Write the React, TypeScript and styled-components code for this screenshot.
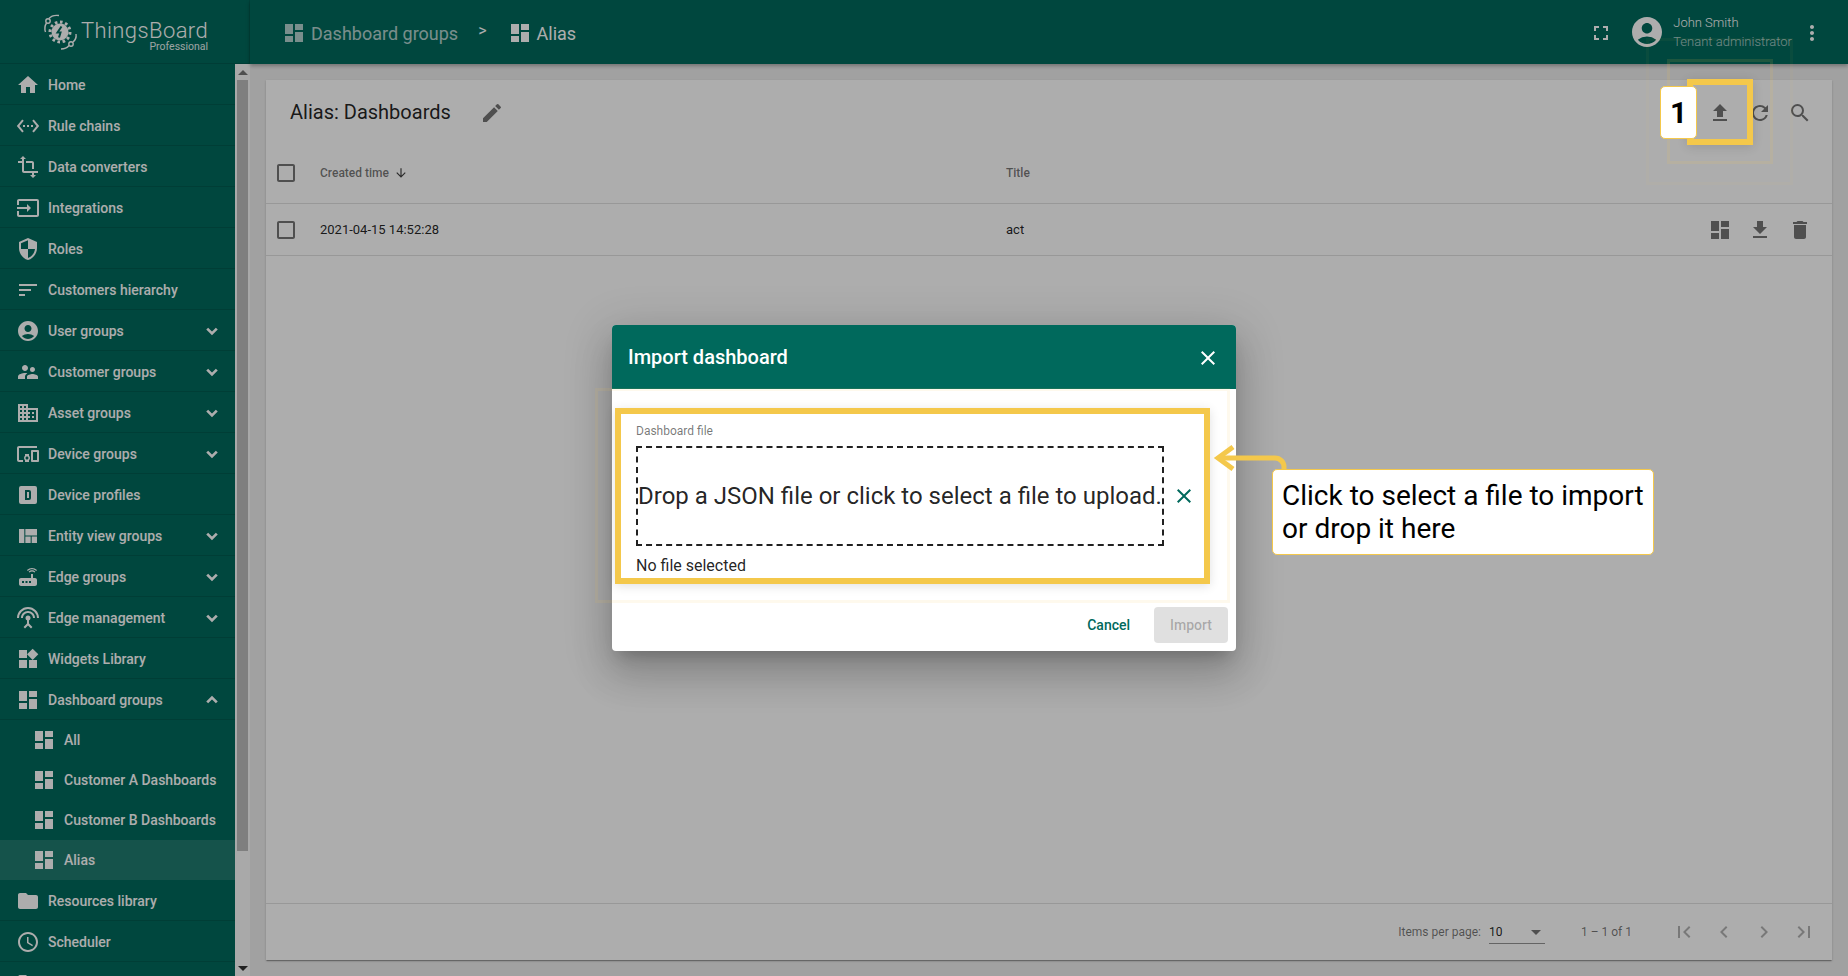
import type { ReactNode } from 'react';
import styled, { createGlobalStyle } from 'styled-components';
import {
  MdAccountCircle,
  MdArrowDownward,
  MdArrowDropDown,
  MdCheckBoxOutlineBlank,
  MdChevronLeft,
  MdChevronRight,
  MdClose,
  MdDashboard,
  MdDelete,
  MdDevicesOther,
  MdDomain,
  MdEdit,
  MdFileDownload,
  MdFileUpload,
  MdFirstPage,
  MdFolder,
  MdFullscreen,
  MdHome,
  MdInput,
  MdLastPage,
  MdMoreVert,
  MdRefresh,
  MdRouter,
  MdSchedule,
  MdSearch,
  MdSecurity,
  MdSettingsEthernet,
  MdSettingsInputAntenna,
  MdSort,
  MdSupervisorAccount,
  MdTransform,
  MdViewQuilt,
  MdWidgets,
} from 'react-icons/md';

const YELLOW = '#f4c84b';
const TEAL = '#00695c';

const GlobalStyle = createGlobalStyle`
  html, body {
    margin: 0;
    height: 100%;
    overflow: hidden;
    font-family: Roboto, "Liberation Sans", sans-serif;
  }
  * {
    box-sizing: border-box;
  }
`;

const Shell = styled.div`
  position: relative;
  display: flex;
  width: 1848px;
  height: 976px;
  overflow: hidden;
  background: #eee;
`;

const Sidebar = styled.aside`
  display: flex;
  flex-direction: column;
  flex: 0 0 250px;
  background: ${TEAL};
  color: #fff;
`;

const LogoBar = styled.div`
  display: flex;
  align-items: center;
  flex: 0 0 64px;
  padding-left: 42px;
  border-bottom: 1px solid rgba(0, 0, 0, 0.12);
  border-right: 1px solid rgba(0, 0, 0, 0.08);
`;

const LogoText = styled.div`
  display: flex;
  flex-direction: column;
  align-items: flex-end;
  margin: 11px 0 0 1px;
`;

const LogoName = styled.span`
  font-size: 22px;
  line-height: 20px;
  font-weight: 300;
  letter-spacing: 0.4px;
`;

const LogoSub = styled.span`
  font-size: 10.5px;
  line-height: 12px;
  opacity: 0.9;
`;

const SideBody = styled.div`
  display: flex;
  flex: 1;
  min-height: 0;
`;

const Nav = styled.nav`
  flex: 1;
  min-width: 0;
  overflow: hidden;
`;

const NavRow = styled.div<{ $sub?: boolean; $active?: boolean }>`
  display: flex;
  align-items: center;
  height: ${({ $sub }) => ($sub ? '40px' : '41px')};
  padding: ${({ $sub }) => ($sub ? '0 0 0 32px' : '1px 0 0 16px')};
  font-size: 14px;
  font-weight: 500;
  white-space: nowrap;
  background: ${({ $active }) => ($active ? 'rgba(255, 255, 255, 0.12)' : 'transparent')};
  border-bottom: ${({ $sub }) => ($sub ? 'none' : '1px solid rgba(0, 0, 0, 0.12)')};

  svg {
    flex: none;
    font-size: 24px;
  }
`;

const NavLabel = styled.span`
  flex: 1;
  margin-left: 8px;
`;

const ChevronIcon = styled.svg<{ $up?: boolean }>`
  margin-right: 11px;
  transform: ${({ $up }) => ($up ? 'rotate(180deg)' : 'none')};
`;

const Chevron = ({ up }: { up?: boolean }) => (
  <ChevronIcon $up={up} width="24" height="24" viewBox="0 0 24 24" fill="none" aria-hidden="true">
    <path d="M7.2 9.6l4.8 4.8 4.8-4.8" stroke="currentColor" strokeWidth="2.7" />
  </ChevronIcon>
);

const ScrollTrack = styled.div`
  display: flex;
  flex-direction: column;
  align-items: center;
  flex: 0 0 15px;
  background: #fafafa;
`;

const ScrollArrow = styled.div<{ $down?: boolean }>`
  flex: 0 0 5px;
  width: 0;
  height: 0;
  margin: 6px 0 5px;
  border-left: 5px solid transparent;
  border-right: 5px solid transparent;
  border-bottom: ${({ $down }) => ($down ? 'none' : '5px solid #777')};
  border-top: ${({ $down }) => ($down ? '5px solid #333' : 'none')};
`;

const ScrollThumb = styled.div`
  width: 11px;
  flex: 0 0 771px;
  background: #bcbcbc;
`;

const ScrollGap = styled.div`
  flex: 1;
`;

const Main = styled.main`
  display: flex;
  flex-direction: column;
  flex: 1;
  min-width: 0;
  isolation: isolate;
`;

const TopBar = styled.header`
  display: flex;
  align-items: center;
  flex: 0 0 64px;
  padding: 2px 24px 0 32px;
  background: ${TEAL};
  color: #fff;
  box-shadow: 0 2px 4px rgba(0, 0, 0, 0.3);
  z-index: 1;
`;

const Crumb = styled.span<{ $muted?: boolean }>`
  display: flex;
  align-items: center;
  gap: 5px;
  font-size: 18px;
  opacity: ${({ $muted }) => ($muted ? 0.7 : 1)};

  svg {
    font-size: 24px;
  }
`;

const CrumbArrow = styled.span`
  margin: -6px 21px 0 20px;
  font-size: 16px;
`;

const TopSpacer = styled.div`
  flex: 1;
`;

const UserBlock = styled.div`
  display: flex;
  align-items: center;
  margin: -2px 8px 0 16px;
`;

const UserText = styled.div`
  display: flex;
  flex-direction: column;
  gap: 5px;
  margin-left: 8px;
  font-size: 13px;
  line-height: 14px;
  font-weight: 300;
`;

const UserRole = styled.span`
  opacity: 0.65;
`;

const Content = styled.div`
  flex: 1;
  min-height: 0;
  padding: 16px;
`;

const Card = styled.section`
  display: flex;
  flex-direction: column;
  height: 100%;
  background: #fff;
  box-shadow: 0 2px 1px -1px rgba(0, 0, 0, 0.2), 0 1px 1px rgba(0, 0, 0, 0.14),
    0 1px 3px rgba(0, 0, 0, 0.12);
`;

const CardToolbar = styled.div`
  display: flex;
  align-items: center;
  flex: 0 0 64px;
  padding: 0 20px 0 24px;
`;

const CardTitle = styled.h1`
  margin: 0 29px 0 0;
  font-size: 20px;
  font-weight: 400;
  color: rgba(0, 0, 0, 0.87);
`;

const IconGroup = styled.div<{ $drop?: boolean }>`
  display: flex;
  gap: 16px;
  margin-left: auto;
  margin-top: ${({ $drop }) => ($drop ? '2px' : '0')};
  color: rgba(0, 0, 0, 0.54);
  font-size: 24px;

  svg {
    display: block;
  }
`;

const EditIcon = styled(MdEdit)`
  margin-top: 2px;
  font-size: 24px;
  color: rgba(0, 0, 0, 0.54);
`;

const TableRow = styled.div<{ $head?: boolean }>`
  display: grid;
  grid-template-columns: 54px 686px 1fr auto;
  align-items: center;
  flex: 0 0 ${({ $head }) => ($head ? '60px' : '52px')};
  padding: ${({ $head }) => ($head ? '0 20px 2px 0' : '0 20px 0 0')};
  border-bottom: 1px solid rgba(0, 0, 0, 0.12);
  font-size: ${({ $head }) => ($head ? '12px' : '13px')};
  font-weight: ${({ $head }) => ($head ? 500 : 400)};
  color: ${({ $head }) => ($head ? 'rgba(0, 0, 0, 0.54)' : 'rgba(0, 0, 0, 0.87)')};
`;

const CheckCell = styled.span`
  display: flex;
  margin-left: 8px;
  font-size: 24px;
  color: rgba(0, 0, 0, 0.54);
`;

const SortHead = styled.span`
  display: flex;
  align-items: center;
  gap: 5px;

  svg {
    font-size: 14px;
    color: rgba(0, 0, 0, 0.75);
  }
`;

const TableFill = styled.div`
  flex: 1;
`;

const Paginator = styled.footer`
  display: flex;
  align-items: center;
  flex: 0 0 57px;
  padding-right: 16px;
  border-top: 1px solid rgba(0, 0, 0, 0.12);
  font-size: 12px;
  color: rgba(0, 0, 0, 0.54);
`;

const PageLabel = styled.span`
  margin-left: auto;
`;

const PageSelect = styled.span`
  display: flex;
  align-items: center;
  justify-content: space-between;
  width: 56px;
  height: 22px;
  margin: 1px 36px 0 8px;
  border-bottom: 1px solid rgba(0, 0, 0, 0.42);
  color: rgba(0, 0, 0, 0.87);

  svg {
    margin-right: -3px;
    font-size: 24px;
    color: rgba(0, 0, 0, 0.54);
  }
`;

const PageButtons = styled.div`
  display: flex;
  gap: 16px;
  margin-left: 40px;
  font-size: 24px;
  color: rgba(0, 0, 0, 0.3);

  svg {
    display: block;
  }
`;

const Backdrop = styled.div`
  position: absolute;
  inset: 0;
  display: flex;
  align-items: center;
  justify-content: center;
  background: rgba(0, 0, 0, 0.32);
`;

const Dialog = styled.div`
  display: flex;
  flex-direction: column;
  width: 624px;
  height: 326px;
  border-radius: 4px;
  background: #fff;
  overflow: hidden;
  box-shadow: 0 11px 15px -7px rgba(0, 0, 0, 0.2), 0 24px 38px 3px rgba(0, 0, 0, 0.14),
    0 9px 46px 8px rgba(0, 0, 0, 0.12);
`;

const DialogHeader = styled.div`
  display: flex;
  align-items: center;
  justify-content: space-between;
  flex: 0 0 64px;
  padding: 0 16px;
  background: ${TEAL};
  color: #fff;
  font-size: 20px;
  font-weight: 500;

  svg {
    font-size: 24px;
    margin-top: 1px;
  }
`;

const DialogBody = styled.div`
  flex: 1;
  padding: 34px 24px 0;
`;

const FieldLabel = styled.div`
  margin-bottom: 7px;
  font-size: 12px;
  line-height: 16px;
  color: rgba(0, 0, 0, 0.54);
`;

const DropRow = styled.div`
  display: flex;
  align-items: center;
  gap: 8px;
`;

const DropZone = styled.div`
  display: flex;
  align-items: center;
  width: 528px;
  height: 100px;
  border: 2px dashed rgba(0, 0, 0, 0.87);
  font-size: 24px;
  white-space: nowrap;
  color: rgba(0, 0, 0, 0.87);
`;

const ClearIcon = styled(MdClose)`
  font-size: 24px;
  color: ${TEAL};
`;

const FileName = styled.div`
  margin-top: 9px;
  font-size: 16px;
  line-height: 22px;
  color: rgba(0, 0, 0, 0.87);
`;

const DialogFooter = styled.div`
  display: flex;
  justify-content: flex-end;
  gap: 8px;
  padding: 8px;
`;

const DialogButton = styled.button<{ $primary?: boolean }>`
  height: 36px;
  padding: 0 16px;
  border: none;
  border-radius: 4px;
  font-family: inherit;
  font-size: 14px;
  font-weight: 500;
  background: ${({ $primary }) => ($primary ? 'rgba(0, 0, 0, 0.12)' : 'transparent')};
  color: ${({ $primary }) => ($primary ? 'rgba(0, 0, 0, 0.26)' : TEAL)};
`;

/* tour overlay: everything below lies over the dimmed page */
const Highlight = styled.div<{ $x: number; $y: number; $w: number; $h: number }>`
  position: absolute;
  left: ${({ $x }) => $x}px;
  top: ${({ $y }) => $y}px;
  width: ${({ $w }) => $w}px;
  height: ${({ $h }) => $h}px;
  border: 6px solid ${YELLOW};
  box-shadow: 0 2px 10px rgba(0, 0, 0, 0.12);
  pointer-events: none;
`;

const Pulse = styled.div<{ $x: number; $y: number; $w: number; $h: number; $alpha: number }>`
  position: absolute;
  left: ${({ $x }) => $x}px;
  top: ${({ $y }) => $y}px;
  width: ${({ $w }) => $w}px;
  height: ${({ $h }) => $h}px;
  border: 3px solid rgba(244, 200, 75, ${({ $alpha }) => $alpha});
  pointer-events: none;
`;

const StepBadge = styled.div`
  position: absolute;
  left: 1660px;
  top: 86px;
  display: flex;
  align-items: center;
  justify-content: center;
  width: 37px;
  height: 53px;
  border: 1px solid ${YELLOW};
  border-radius: 5px;
  background: #fff;
  font-size: 30px;
  font-weight: 700;
  color: #000;
`;

const Callout = styled.div`
  position: absolute;
  left: 1272px;
  top: 469px;
  width: 382px;
  height: 86px;
  padding: 9px 9px 0;
  border: 1px solid ${YELLOW};
  border-radius: 5px;
  background: #fff;
  font-size: 28px;
  line-height: 33px;
  color: #000;
`;

const CalloutArrow = styled.svg`
  position: absolute;
  left: 1213px;
  top: 445px;
`;

const navTop: [ReactNode, string, boolean][] = [
  [<MdHome />, 'Home', false],
  [<MdSettingsEthernet />, 'Rule chains', false],
  [<MdTransform />, 'Data converters', false],
  [<MdInput />, 'Integrations', false],
  [<MdSecurity />, 'Roles', false],
  [<MdSort />, 'Customers hierarchy', false],
  [<MdAccountCircle />, 'User groups', true],
  [<MdSupervisorAccount />, 'Customer groups', true],
  [<MdDomain />, 'Asset groups', true],
  [<MdDevicesOther />, 'Device groups', true],
  [<DeviceProfileIcon />, 'Device profiles', false],
  [<MdViewQuilt />, 'Entity view groups', true],
  [<MdRouter />, 'Edge groups', true],
  [<MdSettingsInputAntenna />, 'Edge management', true],
  [<MdWidgets />, 'Widgets Library', false],
];

const dashboardGroups = ['All', 'Customer A Dashboards', 'Customer B Dashboards', 'Alias'];

function DeviceProfileIcon() {
  return (
    <svg width="24" height="24" viewBox="0 0 24 24" fill="currentColor">
      <path
        fillRule="evenodd"
        d="M5 3h14a2 2 0 0 1 2 2v14a2 2 0 0 1-2 2H5a2 2 0 0 1-2-2V5a2 2 0 0 1 2-2zm4 4v10h4a2 2 0 0 0 2-2V9a2 2 0 0 0-2-2H9zm2 2h2v6h-2V9z"
      />
    </svg>
  );
}

const Logo = () => (
  <svg width="38" height="40" viewBox="0 0 38 40" fill="none" stroke="currentColor" aria-hidden="true">
    <circle cx="18" cy="20" r="8.5" fill="currentColor" stroke="none" />
    <circle cx="18" cy="20" r="10" strokeWidth="3" strokeDasharray="2.6 2.6" />
    <path d="M19.5 14.5l-4 6h3l-1.5 5" stroke="#00695c" strokeWidth="2" />
    <circle cx="6" cy="9" r="2.2" strokeWidth="1.4" />
    <path d="M7 6.5C9 4 13 3 17 3.5M4.5 11C2.5 14 2.5 17 3.5 20" strokeWidth="1.4" />
    <circle cx="29" cy="32" r="2.2" strokeWidth="1.4" />
    <path d="M27 33.5C25 36 22 37 19 37M31 30C33.5 28 34.5 25 34 22" strokeWidth="1.4" />
  </svg>
);

export default function App() {
  return (
    <>
      <GlobalStyle />
      <Shell>
        <Sidebar>
          <LogoBar>
            <Logo />
            <LogoText>
              <LogoName>ThingsBoard</LogoName>
              <LogoSub>Professional</LogoSub>
            </LogoText>
          </LogoBar>
          <SideBody>
            <Nav>
              {navTop.map(([icon, label, expandable]) => (
                <NavRow key={label}>
                  {icon}
                  <NavLabel>{label}</NavLabel>
                  {expandable && <Chevron />}
                </NavRow>
              ))}
              <NavRow>
                <MdDashboard />
                <NavLabel>Dashboard groups</NavLabel>
                <Chevron up />
              </NavRow>
              {dashboardGroups.map((label) => (
                <NavRow key={label} $sub $active={label === 'Alias'}>
                  <MdDashboard />
                  <NavLabel>{label}</NavLabel>
                </NavRow>
              ))}
              <NavRow>
                <MdFolder />
                <NavLabel>Resources library</NavLabel>
              </NavRow>
              <NavRow>
                <MdSchedule />
                <NavLabel>Scheduler</NavLabel>
              </NavRow>
              <NavRow>
                <MdFolder />
              </NavRow>
            </Nav>
            <ScrollTrack>
              <ScrollArrow />
              <ScrollThumb />
              <ScrollGap />
              <ScrollArrow $down />
            </ScrollTrack>
          </SideBody>
        </Sidebar>

        <Main>
          <TopBar>
            <Crumb $muted>
              <MdDashboard />
              Dashboard groups
            </Crumb>
            <CrumbArrow>&gt;</CrumbArrow>
            <Crumb>
              <MdDashboard />
              Alias
            </Crumb>
            <TopSpacer />
            <MdFullscreen size={24} />
            <UserBlock>
              <MdAccountCircle size={36} />
              <UserText>
                <span>John Smith</span>
                <UserRole>Tenant administrator</UserRole>
              </UserText>
            </UserBlock>
            <MdMoreVert size={24} />
          </TopBar>

          <Content>
            <Card>
              <CardToolbar>
                <CardTitle>Alias: Dashboards</CardTitle>
                <EditIcon />
                <IconGroup $drop>
                  <MdFileUpload />
                  <MdRefresh />
                  <MdSearch />
                </IconGroup>
              </CardToolbar>
              <TableRow $head>
                <CheckCell>
                  <MdCheckBoxOutlineBlank />
                </CheckCell>
                <SortHead>
                  Created time
                  <MdArrowDownward />
                </SortHead>
                <span>Title</span>
              </TableRow>
              <TableRow>
                <CheckCell>
                  <MdCheckBoxOutlineBlank />
                </CheckCell>
                <span>2021-04-15 14:52:28</span>
                <span>act</span>
                <IconGroup>
                  <MdDashboard />
                  <MdFileDownload />
                  <MdDelete />
                </IconGroup>
              </TableRow>
              <TableFill />
              <Paginator>
                <PageLabel>Items per page:</PageLabel>
                <PageSelect>
                  10
                  <MdArrowDropDown />
                </PageSelect>
                <span>1 – 1 of 1</span>
                <PageButtons>
                  <MdFirstPage />
                  <MdChevronLeft />
                  <MdChevronRight />
                  <MdLastPage />
                </PageButtons>
              </Paginator>
            </Card>
          </Content>
        </Main>

        <Backdrop>
          <Dialog>
            <DialogHeader>
              Import dashboard
              <MdClose />
            </DialogHeader>
            <DialogBody>
              <FieldLabel>Dashboard file</FieldLabel>
              <DropRow>
                <DropZone>Drop a JSON file or click to select a file to upload.</DropZone>
                <ClearIcon />
              </DropRow>
              <FileName>No file selected</FileName>
            </DialogBody>
            <DialogFooter>
              <DialogButton>Cancel</DialogButton>
              <DialogButton $primary disabled>
                Import
              </DialogButton>
            </DialogFooter>
          </Dialog>
        </Backdrop>

        <Pulse $x={1646} $y={38} $w={147} $h={147} $alpha={0.04} />
        <Pulse $x={1667} $y={59} $w={106} $h={105} $alpha={0.12} />
        <Highlight $x={1687} $y={79} $w={66} $h={66} />
        <StepBadge>1</StepBadge>

        <Pulse $x={595} $y={388} $w={635} $h={215} $alpha={0.1} />
        <Highlight $x={615} $y={408} $w={595} $h={176} />

        <CalloutArrow width="76" height="26" viewBox="0 0 76 26" fill="none" aria-hidden="true">
          <path d="M20 2L5 13l15 11" stroke={YELLOW} strokeWidth="5" />
          <path d="M6 13h56a9 9 0 0 1 9 9v4" stroke={YELLOW} strokeWidth="5" />
        </CalloutArrow>
        <Callout>Click to select a file to import or drop it here</Callout>
      </Shell>
    </>
  );
}
